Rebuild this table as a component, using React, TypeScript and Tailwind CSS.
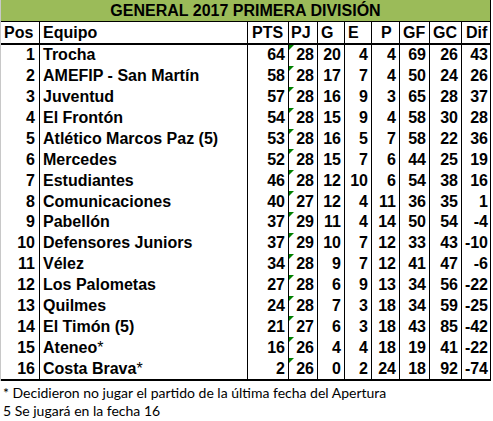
import React from 'react';

type Row = [number, string, number, number, number, number, number, number, number, number];

const rows: Row[] = [
  [1, 'Trocha', 64, 28, 20, 4, 4, 69, 26, 43],
  [2, 'AMEFIP - San Martín', 58, 28, 17, 7, 4, 50, 24, 26],
  [3, 'Juventud', 57, 28, 16, 9, 3, 65, 28, 37],
  [4, 'El Frontón', 54, 28, 15, 9, 4, 58, 30, 28],
  [5, 'Atlético Marcos Paz (5)', 53, 28, 16, 5, 7, 58, 22, 36],
  [6, 'Mercedes', 52, 28, 15, 7, 6, 44, 25, 19],
  [7, 'Estudiantes', 46, 28, 12, 10, 6, 54, 38, 16],
  [8, 'Comunicaciones', 40, 27, 12, 4, 11, 36, 35, 1],
  [9, 'Pabellón', 37, 29, 11, 4, 14, 50, 54, -4],
  [10, 'Defensores Juniors', 37, 29, 10, 7, 12, 33, 43, -10],
  [11, 'Vélez', 34, 28, 9, 7, 12, 41, 47, -6],
  [12, 'Los Palometas', 27, 28, 6, 9, 13, 34, 56, -22],
  [13, 'Quilmes', 24, 28, 7, 3, 18, 34, 59, -25],
  [14, 'El Timón (5)', 21, 27, 6, 3, 18, 43, 85, -42],
  [15, 'Ateneo*', 16, 26, 4, 4, 18, 19, 41, -22],
  [16, 'Costa Brava*', 2, 26, 0, 2, 24, 18, 92, -74],
];

// column widths include the 1px right border
const widths = [
  'w-[39px]', 'w-[208px]', 'w-[41px]', 'w-[29px]', 'w-[27px]',
  'w-[27px]', 'w-[28px]', 'w-[30px]', 'w-[32px]', 'w-[29px]',
];

const headers = ['Pos', 'Equipo', 'PTS', 'PJ', 'G', 'E', 'P', 'GF', 'GC', 'Dif'];
const headerPad = [
  'pl-[3px]', 'pl-[3px]', 'pl-[4px]', 'pl-[2px]', 'pl-[3px]',
  'pl-[3px]', 'pl-[9px]', 'pl-[3px]', 'pl-[3px]', 'pl-[4px]',
];

const TeamName = ({ name }: { name: string }) => {
  if (name.endsWith('*')) {
    return (
      <>
        {name.slice(0, -1)}
        <span className="font-normal">*</span>
      </>
    );
  }
  return <>{name}</>;
};

export default function App() {
  return (
    <div className="w-[493px] h-[421px] bg-white text-black font-['Liberation_Sans',Arial,sans-serif]">
      <div className="w-[491px] border-l border-[#c8c8c8]">
        <div className="h-[22px] bg-[#9bbb59] border-b border-r border-black flex items-center justify-center text-[16px] font-bold leading-none">
          GENERAL 2017 PRIMERA DIVISIÓN
        </div>

        <div className="flex h-[23px] border-b-2 border-black font-bold text-[16px]">
          {headers.map((h, i) => (
            <div key={h} className={`${widths[i]} ${headerPad[i]} h-full border-r border-black flex items-center`}>
              {h}
            </div>
          ))}
        </div>

        <div className="border-b-2 border-black">
          {rows.map((r) => (
            <div key={r[0]} className="flex h-[20.875px] font-bold text-[16px]">
              {r.map((v, i) => (
                <div
                  key={i}
                  className={`${widths[i]} relative h-full border-r border-black flex items-center whitespace-nowrap ${
                    i === 1 ? 'pl-[3px]' : i === 0 ? 'justify-end pr-[4px]' : i === 9 ? 'justify-end pr-[2px]' : 'justify-end pr-[3px]'
                  }`}
                >
                  {i === 3 && (
                    <span className="absolute left-0 top-0 w-0 h-0 border-t-[5px] border-r-[5px] border-t-[#008000] border-r-transparent" />
                  )}
                  {i === 1 ? <TeamName name={v as string} /> : v}
                </div>
              ))}
            </div>
          ))}
        </div>
      </div>

      <div className="pl-[3px] pt-[3px] font-['Lato','Open_Sans',sans-serif] text-[14px] leading-[18px]">
        <div>* Decidieron no jugar el partido de la última fecha del Apertura</div>
        <div>5 Se jugará en la fecha 16</div>
      </div>
    </div>
  );
}
